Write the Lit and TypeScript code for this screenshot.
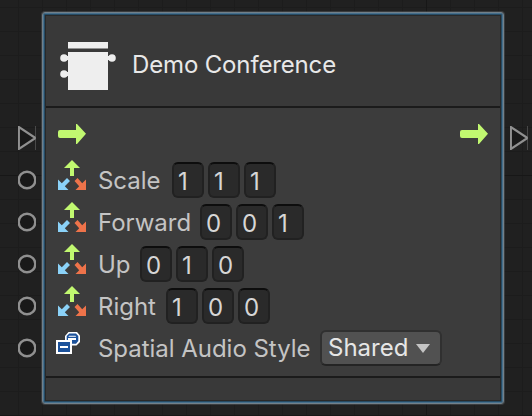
import { LitElement, html, css } from 'lit';
import { customElement } from 'lit/decorators.js';

const arrow = html`<svg class="arrow" width="28" height="20" viewBox="0 0 28 20"><path d="M2 6H18V0H19L28 9.7L19 20H18V14H2Q0 14 0 12V8Q0 6 2 6Z" fill="#c1f870"/></svg>`;
const triPort = html`<svg class="port" width="18" height="24" viewBox="0 0 18 24"><path d="M.9 1V23L17.5 12Z" fill="#191919" stroke="#909090" stroke-width="2.1"/><path d="M17.7 0V24" stroke="#777" stroke-width=".6"/></svg>`;
const ringPort = html`<svg class="port" width="18" height="20" viewBox="0 0 18 20"><circle cx="9" cy="10" r="8.3" fill="#191919" stroke="#909090" stroke-width="2.4"/></svg>`;
const vectorIcon = html`<svg class="vec" width="28" height="30" viewBox="0 0 28 30">
  <path d="M14 0L22 8H16V16H12V8H6Z" fill="#c1f870"/>
  <path d="M0 19.5V30H10.5L6.8 26.2L12 21L9 18L3.8 23.2Z" fill="#8bd2f8"/>
  <path d="M28 19.5V30H17.5L21.2 26.2L16.5 21L19.5 18L24.2 23.2Z" fill="#ee734a"/></svg>`;
const enumIcon = html`<svg class="enum" width="24" height="22" viewBox="0 0 24 22">
  <path d="M12.5 0H21L24 3.5V10L20.5 13.5H13L9 10V4Z" fill="#fff"/>
  <path d="M13.3 1.6H20L22.3 4V9L20 11.7H13L10.7 9V4Z" fill="#1c529b"/>
  <path d="M13 3.8H19.5L20 4.4V4.8H12.4ZM12 6H20V8H12Z" fill="#fff"/>
  <path d="M0 8H16V22H0Z" fill="#fff"/><path d="M2 10H14V20H2Z" fill="#1c529b"/><path d="M4 14H12V16H4Z" fill="#fff"/></svg>`;

const rows = [
  { label: 'Scale', values: [1, 1, 1], width: 74 },
  { label: 'Forward', values: [0, 0, 1], width: 102 },
  { label: 'Up', values: [0, 1, 0], width: 42 },
  { label: 'Right', values: [1, 0, 0], width: 68 },
];

@customElement('app-root')
export class AppRoot extends LitElement {
  static styles = css`
    :host {
      display: block; box-sizing: border-box; width: 532px; height: 416px; padding: 12px 0 0 42px; overflow: hidden;
      font: 400 24px/30px Inter, sans-serif; color: #c4c4c4;
      background-color: #202020;
      background-image:
        linear-gradient(#171717, #171717), linear-gradient(#171717, #171717),
        linear-gradient(#171717, #171717),
        repeating-linear-gradient(90deg, transparent 0 18px, #1c1c1c 18px 19px, transparent 19px 24px),
        repeating-linear-gradient(transparent 0 7px, #1c1c1c 7px 8px, transparent 8px 24px);
      background-size: 1px 100%, 100% 1px, 100% 1px, auto, auto;
      background-position: 426px 0, 0 175px, 0 415px, 0 0, 0 0;
      background-repeat: no-repeat, no-repeat, no-repeat, repeat, repeat;
    }
    .node {
      box-sizing: border-box; width: 462px; height: 392px; border: 1px solid #71808a; border-radius: 3px;
      background: #3c3c3c;
      box-shadow: inset 0 0 0 1px #47708d, inset 0 0 0 2px #254a63, inset 0 0 0 3px #292929, 0 0 0 1px rgba(110, 115, 120, .35);
      padding: 3px; display: flex; flex-direction: column;
    }
    .head { height: 90px; display: flex; align-items: center; background: #393939; border-bottom: 2px solid #1b1b1b; }
    .logo { margin: 10px 0 0 14px; }
    .title { margin: 7px 0 0 16px; color: #e8e8e8; letter-spacing: -.15px; white-space: nowrap; }
    .body { height: 270px; box-sizing: border-box; padding-top: 15px; border-bottom: 2px solid #1b1b1b; }
    .foot { flex: 1; background: #393939; }
    .row { height: 42px; display: flex; align-items: center; margin-left: -28px; width: 510px; }
    .flow { height: 36px; }
    .port { flex: none; }
    .flow .port { margin-top: -6px; }
    .arrow { margin: -14px 0 0 22px; }
    .out { display: flex; margin-left: auto; margin-right: 22px; }
    .vec { margin: -10px 12px 0 22px; flex: none; }
    .enum { margin: -10px 18px 0 20px; flex: none; }
    .label { white-space: nowrap; letter-spacing: -.03px; margin-top: 2px; }
    .fields { display: flex; gap: 4px; }
    .field {
      box-sizing: border-box; width: 32px; height: 36px; border: 2px solid #212121; border-top-color: #0d0d0d;
      border-radius: 6px; background: #2a2a2a; color: #d6d6d6; padding-left: 4px; line-height: 35px;
    }
    .select {
      box-sizing: border-box; display: flex; align-items: center; width: 122px; height: 36px; padding: 0 10px 0 6px;
      border: 2px solid #303030; border-bottom-color: #242424; border-radius: 6px; background: #515151; color: #e6e6e6;
    }
    .caret { margin-left: auto; }
  `;

  render() {
    return html`<div class="node">
      <div class="head">
        <svg class="logo" width="56" height="48" viewBox="0 0 56 48" fill="#eee">
          <path d="M8 0H48V6.5H8ZM8 10H48V48H8ZM4 14H8V18H4ZM4 30H8V34H4ZM48 14H52V18H48Z"/>
          <circle cx="4" cy="16" r="3.8"/><circle cx="4" cy="32" r="3.8"/><circle cx="52" cy="16" r="3.8"/>
        </svg>
        <span class="title">Demo Conference</span>
      </div>
      <div class="body">
        <div class="row flow">${triPort}${arrow}<span class="out">${arrow}</span>${triPort}</div>
        ${rows.map(r => html`<div class="row">${ringPort}${vectorIcon}
          <span class="label" style="width:${r.width}px">${r.label}</span>
          <div class="fields">${r.values.map(v => html`<div class="field">${v}</div>`)}</div>
        </div>`)}
        <div class="row">${ringPort}${enumIcon}
          <span class="label" style="width:222px">Spatial Audio Style</span>
          <div class="select"><span>Shared</span><svg class="caret" width="14" height="9" viewBox="0 0 14 9"><path d="M0 0H14L7 9Z" fill="#c4c4c4"/></svg></div>
        </div>
      </div>
      <div class="foot"></div>
    </div>`;
  }
}
